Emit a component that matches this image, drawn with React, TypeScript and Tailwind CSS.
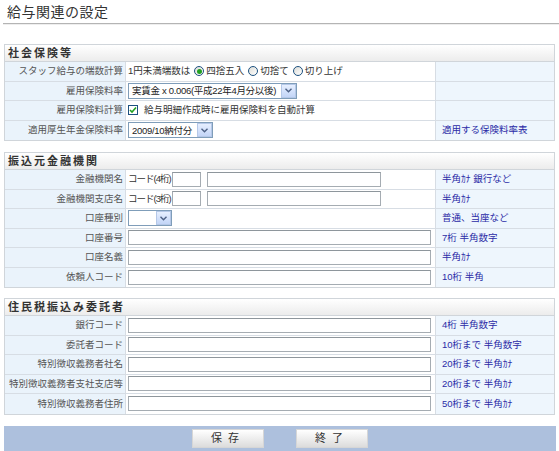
import React from 'react';

const font = { fontFamily: '"Liberation Sans", "Noto Sans CJK JP", sans-serif' };

// dropdown arrow in the XP-like style of the original
const SelectArrow = () => (
  <span className="flex h-[14px] w-[15px] shrink-0 items-center justify-center border border-[#b5c8e8] bg-gradient-to-b from-[#e6efff] to-[#c3d5f7]">
    <svg width="7" height="5" viewBox="0 0 7 5">
      <path d="M0.5 0.8 L3.5 3.8 L6.5 0.8" fill="none" stroke="#4d6185" strokeWidth="1.4" />
    </svg>
  </span>
);

const Select = ({ text, width }: { text: string; width: string }) => (
  <div className={`flex h-[16px] items-center justify-between border border-[#7f9db9] bg-white pl-[3px] ${width}`}>
    <span className="whitespace-nowrap text-[9.5px] leading-none tracking-[-0.3px] text-[#222]">{text}</span>
    <SelectArrow />
  </div>
);

const Input = ({ width }: { width: string }) => (
  <div className={`h-[15px] shrink-0 border border-[#a5acb2] border-t-[#8e969c] bg-white ${width}`} />
);

const Radio = ({ checked }: { checked?: boolean }) => (
  <span className="flex h-[10px] w-[10px] shrink-0 items-center justify-center rounded-full border border-[#1c5180] bg-gradient-to-br from-[#dcdcd7] to-white">
    {checked && <span className="h-[5px] w-[5px] rounded-full bg-[#21a121]" />}
  </span>
);

const Row = ({ label, note, children, last }: { label: string; note?: string; children?: React.ReactNode; last?: boolean }) => (
  <div className={`grid h-[19.5px] grid-cols-[121px_309px_1fr] ${last ? '' : 'border-b border-[#d7dde4]'}`}>
    <div className="flex items-center justify-end whitespace-nowrap border-r border-[#d7dde4] bg-[#eaf3fb] pr-[2px] text-[9.5px] text-[#555]">
      {label}
    </div>
    <div className="flex items-center gap-[4px] whitespace-nowrap pl-[2px] text-[9.5px] text-[#333]">{children}</div>
    <div className="flex items-center whitespace-nowrap border-l border-[#d7dde4] bg-[#eef6fd] pl-[6px] text-[9.5px] text-[#2b2ba6]">
      {note}
    </div>
  </div>
);

const Section = ({ title, children }: { title: string; children: React.ReactNode }) => (
  <div className="ml-[4px] w-[551px] border border-[#d0d5da]">
    <div className="flex h-[17px] items-center border-b border-[#d0d5da] bg-gradient-to-b from-white to-[#ececec] pl-[3px] text-[11px] font-bold tracking-[2px] text-[#333]">
      {title}
    </div>
    {children}
  </div>
);

const Button = ({ label }: { label: string }) => (
  <button className="h-[19px] w-[72px] border border-[#d6d6d6] bg-gradient-to-b from-white to-[#dcdcdc] text-[11px] tracking-[6px] text-[#333]">
    {label}
  </button>
);

export default function App() {
  return (
    <div className="h-[451px] w-[559px] bg-white" style={font}>
      <div className="px-[7px] pt-[3px] text-[14px] leading-[18px] tracking-[0.5px] text-[#333]">給与関連の設定</div>
      <div className="ml-[3px] mt-[2px] h-[2px] border-t border-[#b4b4b4] bg-[#eeeeee]" />

      <div className="mt-[19px]">
        <Section title="社会保険等">
          <Row label="スタッフ給与の端数計算">
            <span>1円未満端数は</span>
            <Radio checked />
            <span className="-ml-[2px]">四捨五入</span>
            <Radio />
            <span className="-ml-[2px]">切捨て</span>
            <Radio />
            <span className="-ml-[2px]">切り上げ</span>
          </Row>
          <Row label="雇用保険料率">
            <Select text="実賃金 x 0.006(平成22年4月分以後)" width="w-[169px]" />
          </Row>
          <Row label="雇用保険料計算">
            <span className="flex h-[10px] w-[10px] items-center justify-center border border-[#1c5180] bg-white">
              <svg width="8" height="8" viewBox="0 0 8 8">
                <path d="M1 4 L3 6 L7 1.5" fill="none" stroke="#21a121" strokeWidth="1.6" />
              </svg>
            </span>
            <span className="ml-[2px]">給与明細作成時に雇用保険料を自動計算</span>
          </Row>
          <Row label="適用厚生年金保険料率" note="適用する保険料率表" last>
            <Select text="2009/10納付分" width="w-[85px]" />
          </Row>
        </Section>
      </div>

      <div className="mt-[11px]">
        <Section title="振込元金融機関">
          <Row label="金融機関名" note="半角ｶﾅ  銀行など">
            <span className="tracking-[-1px]">コード(4桁)</span>
            <Input width="w-[29px] -ml-[3px]" />
            <Input width="w-[174px] ml-[2px]" />
          </Row>
          <Row label="金融機関支店名" note="半角ｶﾅ">
            <span className="tracking-[-1px]">コード(3桁)</span>
            <Input width="w-[29px] -ml-[3px]" />
            <Input width="w-[174px] ml-[2px]" />
          </Row>
          <Row label="口座種別" note="普通、当座など">
            <Select text="" width="w-[44px]" />
          </Row>
          <Row label="口座番号" note="7桁 半角数字">
            <Input width="w-[303px]" />
          </Row>
          <Row label="口座名義" note="半角ｶﾅ">
            <Input width="w-[303px]" />
          </Row>
          <Row label="依頼人コード" note="10桁 半角" last>
            <Input width="w-[303px]" />
          </Row>
        </Section>
      </div>

      <div className="mt-[10px]">
        <Section title="住民税振込み委託者">
          <Row label="銀行コード" note="4桁 半角数字">
            <Input width="w-[303px]" />
          </Row>
          <Row label="委託者コード" note="10桁まで 半角数字">
            <Input width="w-[303px]" />
          </Row>
          <Row label="特別徴収義務者社名" note="20桁まで 半角ｶﾅ">
            <Input width="w-[303px]" />
          </Row>
          <Row label="特別徴収義務者支社支店等" note="20桁まで 半角ｶﾅ">
            <Input width="w-[303px]" />
          </Row>
          <Row label="特別徴収義務者住所" note="50桁まで 半角ｶﾅ" last>
            <Input width="w-[303px]" />
          </Row>
        </Section>
      </div>

      <div className="ml-[4px] mt-[11px] flex h-[26px] w-[552px] items-center justify-center gap-[32px] bg-[#adc0dd]">
        <Button label="保存" />
        <Button label="終了" />
      </div>
    </div>
  );
}
